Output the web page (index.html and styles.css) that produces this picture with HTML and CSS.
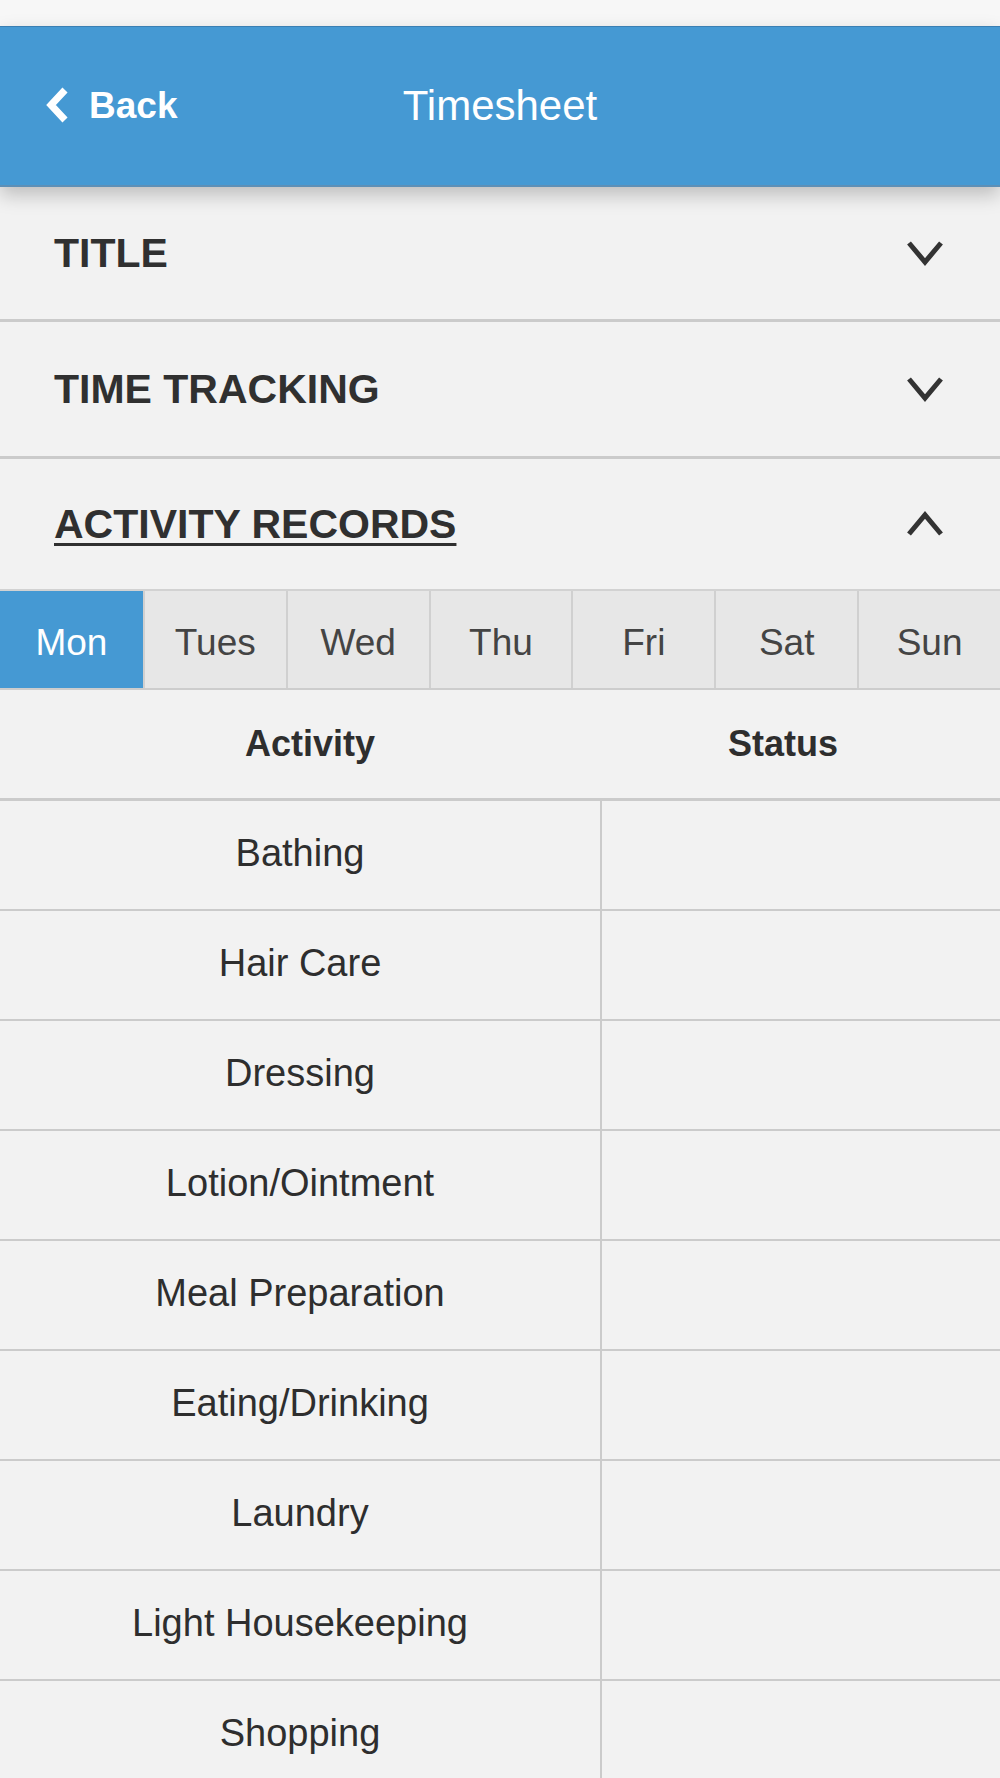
FILE: index.html
```html
<!DOCTYPE html>
<html>
<head>
<meta charset="utf-8">
<title>Timesheet</title>
<link rel="stylesheet" href="styles.css">
</head>
<body>
<div class="statusbar"></div>
<header class="navbar">
  <a class="back">
    <svg class="back-icon" width="24" height="36" viewBox="0 0 24 36"><polyline points="20,3 6,18 20,33" fill="none" stroke="#fff" stroke-width="7" stroke-linejoin="miter"/></svg>
    <span>Back</span>
  </a>
  <h1 class="nav-title">Timesheet</h1>
  <div></div>
</header>
<main>
  <section class="acc-item first">
    <span class="acc-title">TITLE</span>
    <svg class="chev" width="38" height="26" viewBox="0 0 38 26"><polyline points="3,3 19,22 35,3" fill="none" stroke="#333" stroke-width="5"/></svg>
  </section>
  <section class="acc-item second">
    <span class="acc-title">TIME TRACKING</span>
    <svg class="chev" width="38" height="26" viewBox="0 0 38 26"><polyline points="3,3 19,22 35,3" fill="none" stroke="#333" stroke-width="5"/></svg>
  </section>
  <section class="acc-item third">
    <span class="acc-title open">ACTIVITY RECORDS</span>
    <svg class="chev" width="38" height="26" viewBox="0 0 38 26"><polyline points="3,23 19,4 35,23" fill="none" stroke="#333" stroke-width="5"/></svg>
  </section>
  <nav class="tabs">
    <div class="tab active">Mon</div>
    <div class="tab">Tues</div>
    <div class="tab">Wed</div>
    <div class="tab">Thu</div>
    <div class="tab">Fri</div>
    <div class="tab">Sat</div>
    <div class="tab">Sun</div>
  </nav>
  <div class="thead">
    <div class="th th-activity">Activity</div>
    <div class="th th-status">Status</div>
  </div>
  <div class="tbody">
    <div class="row"><div class="cell">Bathing</div><div class="cell status"></div></div>
    <div class="row"><div class="cell">Hair Care</div><div class="cell status"></div></div>
    <div class="row"><div class="cell">Dressing</div><div class="cell status"></div></div>
    <div class="row"><div class="cell">Lotion/Ointment</div><div class="cell status"></div></div>
    <div class="row"><div class="cell">Meal Preparation</div><div class="cell status"></div></div>
    <div class="row"><div class="cell">Eating/Drinking</div><div class="cell status"></div></div>
    <div class="row"><div class="cell">Laundry</div><div class="cell status"></div></div>
    <div class="row"><div class="cell">Light Housekeeping</div><div class="cell status"></div></div>
    <div class="row"><div class="cell">Shopping</div><div class="cell status"></div></div>
  </div>
</main>
</body>
</html>
```
FILE: styles.css
```css
* { box-sizing: border-box; }
html, body {
  margin: 0;
  padding: 0;
  background: #f2f2f2;
  font-family: "Liberation Sans", Arial, sans-serif;
  color: #2e2e2e;
  overflow: hidden;
}
.statusbar {
  height: 26px;
  background: #f7f7f7;
}
.navbar {
  position: relative;
  z-index: 2;
  height: 161px;
  background: #4599d3;
  border-top: 1px solid #3a7fb3;
  border-bottom: 2px solid #5d8fb6;
  box-shadow: 0 8px 18px rgba(0, 0, 0, 0.22);
  display: grid;
  grid-template-columns: 1fr auto 1fr;
  align-items: center;
}
.back {
  display: flex;
  align-items: center;
  padding-left: 45px;
  color: #fff;
  font-size: 37px;
  font-weight: bold;
}
.back-icon {
  margin-right: 20px;
  margin-top: -2px;
}
.nav-title {
  margin: 0;
  font-size: 42px;
  font-weight: normal;
  color: #fff;
}
.acc-item {
  display: flex;
  align-items: center;
  justify-content: space-between;
  padding: 0 56px 0 54px;
  background: #f2f2f2;
  border-bottom: 3px solid #cbcbcb;
}
.acc-item.first { height: 135px; }
.acc-item.second { height: 137px; }
.acc-item.third { height: 130px; border-bottom: none; }
.acc-title {
  font-size: 41px;
  font-weight: bold;
  color: #303030;
}
.acc-title.open {
  text-decoration: underline;
  text-decoration-thickness: 3px;
  text-underline-offset: 5px;
}
.chev { display: block; }
.tabs {
  display: grid;
  grid-template-columns: repeat(7, 1fr);
  border-top: 2px solid #d2d2d2;
  border-bottom: 2px solid #cdcdcd;
  background: #e7e7e7;
}
.tab {
  height: 97px;
  display: flex;
  align-items: center;
  justify-content: center;
  padding-top: 6px;
  font-size: 37px;
  color: #444;
  border-left: 2px solid #d0d0d0;
}
.tab:first-child { border-left: none; }
.tab.active {
  background: #4599d3;
  color: #fff;
}
.thead {
  display: grid;
  grid-template-columns: 620px 326px;
  height: 111px;
  align-items: center;
  border-bottom: 3px solid #cbcbcb;
}
.th {
  text-align: center;
  font-size: 36px;
  font-weight: bold;
  color: #2e2e2e;
}
.row {
  display: grid;
  grid-template-columns: 600px 1fr;
  height: 110px;
  border-bottom: 2px solid #cbcbcb;
}
.cell {
  display: flex;
  align-items: center;
  justify-content: center;
  padding-bottom: 4px;
  font-size: 38px;
  color: #2e2e2e;
}
.cell.status {
  border-left: 2px solid #cbcbcb;
}
```
